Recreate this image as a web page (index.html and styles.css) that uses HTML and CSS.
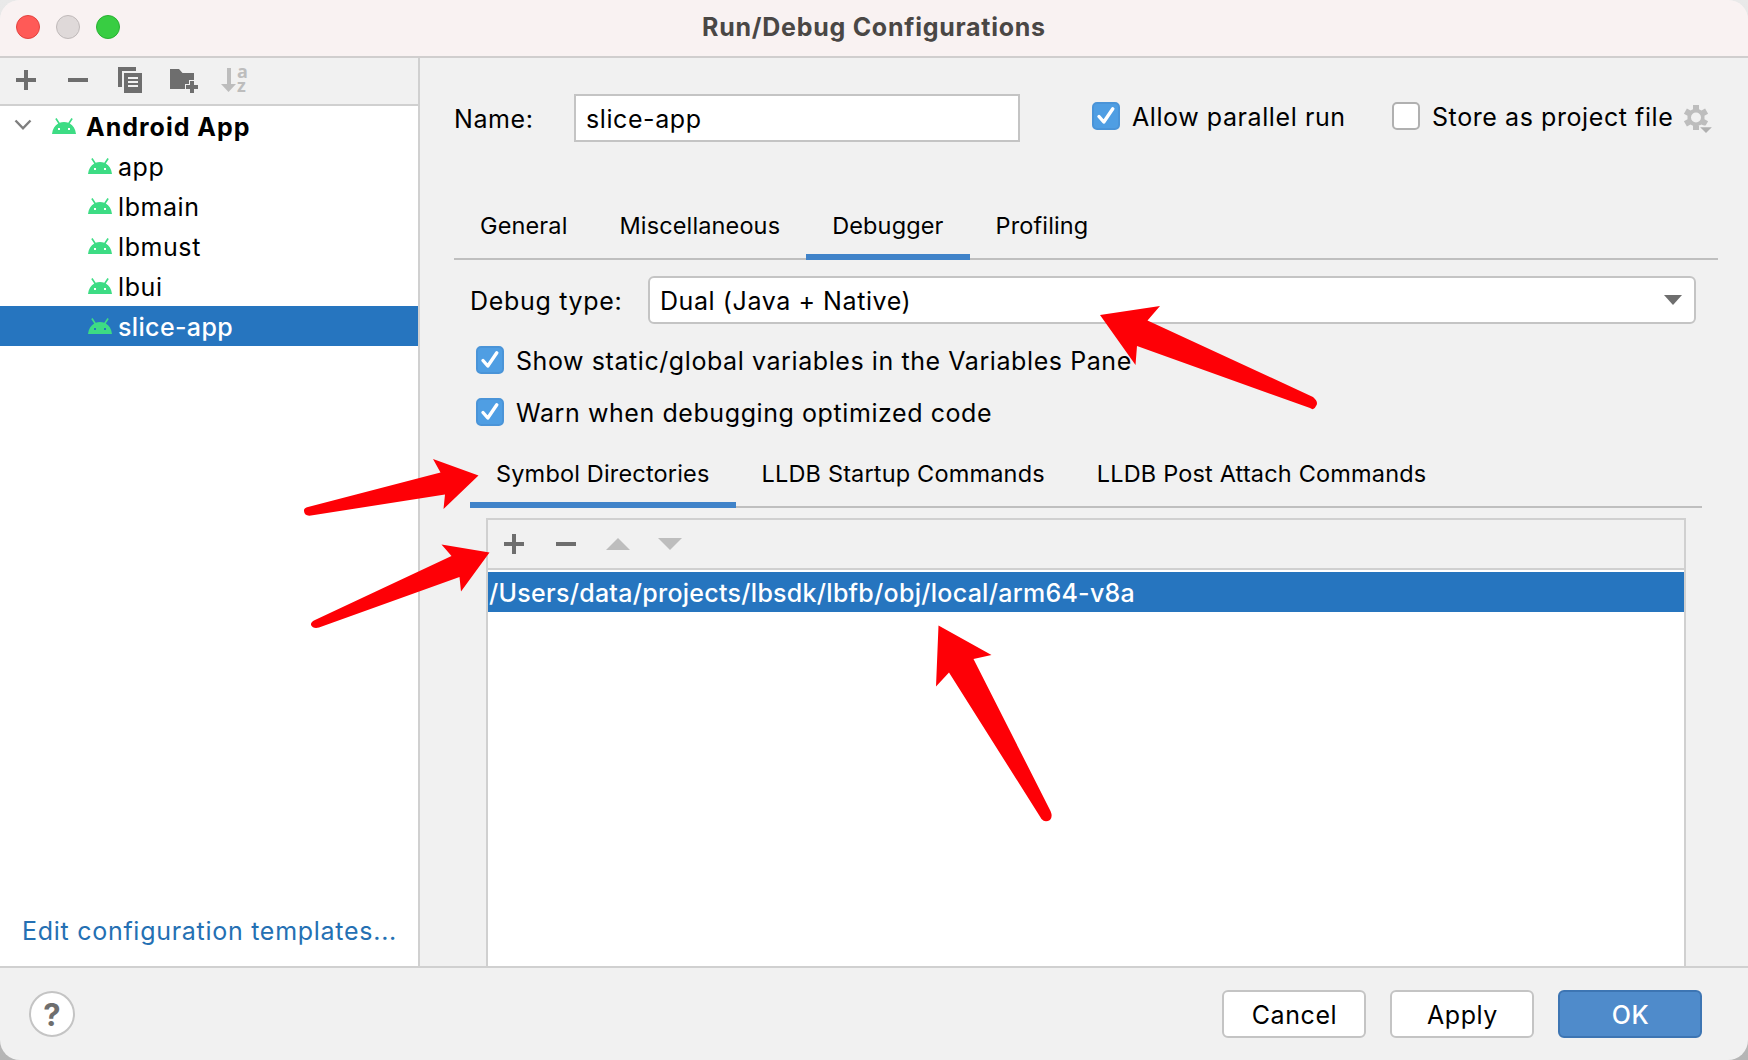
FILE: index.html
```html
<!DOCTYPE html>
<html lang="en">
<head>
<meta charset="utf-8">
<title>Run/Debug Configurations</title>
<link rel="stylesheet" href="styles.css">
</head>
<body>
<svg class="defs" width="0" height="0" aria-hidden="true">
  <symbol id="android" viewBox="0 0 24 16">
    <path d="M0 16C.5 10.800 3 7.200 6.200 5.500L3.200.900 4.600 0 7.700 4.700C10.300 3.700 13.700 3.700 16.300 4.700L19.400 0 20.800.900 17.800 5.500C21 7.200 23.500 10.800 24 16ZM6 10v2h2v-2ZM16 10v2h2v-2Z" fill="#3ddc84" fill-rule="evenodd"/>
  </symbol>
  <symbol id="plus" viewBox="0 0 20 20"><path d="M8 0h4v8h8v4h-8v8H8v-8H0V8h8Z" fill="#6e6e6e"/></symbol>
  <symbol id="minus" viewBox="0 0 20 20"><path d="M0 8h20v4H0Z" fill="#6e6e6e"/></symbol>
  <symbol id="tick" viewBox="0 0 28 28"><path d="M7 14.500 11.800 20 20.800 6.800" fill="none" stroke="#fff" stroke-width="3.400" stroke-linecap="round" stroke-linejoin="round"/></symbol>
</svg>
<div class="window">
  <header class="titlebar">
    <div class="lights"><i class="light red"></i><i class="light gray"></i><i class="light green"></i></div>
    <h1 class="title">Run/Debug Configurations</h1>
  </header>
  <div class="body">
    <aside class="sidebar">
      <div class="toolbar">
        <svg width="20" height="20"><use href="#plus"/></svg>
        <svg class="minus" width="20" height="20"><use href="#minus"/></svg>
        <svg class="copy" width="24" height="26" viewBox="0 0 24 26"><path d="M0 0h18v4H4v16H0ZM6 6h18v20H6ZM10 10v2h10v-2ZM10 14v2h10v-2ZM10 18v2h10v-2Z" fill="#6e6e6e" fill-rule="evenodd"/></svg>
        <svg class="folder" width="28" height="24" viewBox="0 0 28 24"><path d="M0 0h9l3.500 4H24v8h-4v4h-4v4H0Z" fill="#6e6e6e"/><path d="M19 11h6v4h4v6h-4v4h-6v-4h-4v-6h4Z" fill="#f1f1f1"/><path d="M20 12h4v4h4v4h-4v4h-4v-4h-4v-4h4Z" fill="#6e6e6e"/></svg>
        <svg class="sort" width="27" height="26" viewBox="0 0 27 26"><path d="M6 1h4v16h5L7.500 25 0 17h6Z" fill="#bdbdbd"/><text class="sort-text" x="16" y="10.500">a</text><text class="sort-text" x="16" y="24.500">z</text></svg>
      </div>
      <div class="tree">
        <div class="node root"><svg class="chevron" width="18" height="12" viewBox="0 0 18 12"><path d="M1.500 1.500 9 9.300l7.500-7.800" fill="none" stroke="#7f7f7f" stroke-width="2.400"/></svg><svg width="24" height="16"><use href="#android"/></svg><span>Android App</span></div>
        <div class="node"><svg width="24" height="16"><use href="#android"/></svg><span>app</span></div>
        <div class="node"><svg width="24" height="16"><use href="#android"/></svg><span>lbmain</span></div>
        <div class="node"><svg width="24" height="16"><use href="#android"/></svg><span>lbmust</span></div>
        <div class="node"><svg width="24" height="16"><use href="#android"/></svg><span>lbui</span></div>
        <div class="node selected"><svg width="24" height="16"><use href="#android"/></svg><span>slice-app</span></div>
      </div>
      <a class="link">Edit configuration templates...</a>
    </aside>
    <main class="main">
      <div class="name-row">
        <span class="name-label">Name:</span>
        <div class="field">slice-app</div>
        <span class="check on"><svg width="28" height="28"><use href="#tick"/></svg></span>
        <span class="check-label parallel">Allow parallel run</span>
        <span class="check"></span>
        <span class="check-label">Store as project file</span>
        <svg class="gear" width="28" height="30" viewBox="0 0 28 30">
          <path d="M9 1h6v4.200l2.500 1.400 3.600-2.100 3 5.200L20.500 11.800v3.400l3.600 2.100-3 5.200-3.600-2.100L15 21.800V26H9v-4.200L6.500 20.400 2.900 22.500-.1 17.300 3.500 15.200v-3.400L-.1 9.700l3-5.200L6.500 6.600 9 5.200ZM12 8.500a5 5 0 1 0 0 10 5 5 0 0 0 0-10Z" fill="#bdbdbd" fill-rule="evenodd"/>
          <path d="M14.500 21.500h14L21.500 29.500Z" fill="#f1f1f1"/>
          <path d="M16.200 23.200h11.600L22 29Z" fill="#b0b0b0"/>
        </svg>
      </div>
      <nav class="tabs outer">
        <span class="tab">General</span><span class="tab">Miscellaneous</span><span class="tab active">Debugger</span><span class="tab">Profiling</span>
      </nav>
      <section class="form">
        <div class="type-row">
          <span class="type-label">Debug type:</span>
          <div class="combo"><span>Dual (Java + Native)</span><svg width="18" height="10" viewBox="0 0 18 10"><path d="M0 0h18L9 10Z" fill="#6e6e6e"/></svg></div>
        </div>
        <div class="option"><span class="check on"><svg width="28" height="28"><use href="#tick"/></svg></span><span class="check-label">Show static/global variables in the Variables Pane</span></div>
        <div class="option"><span class="check on"><svg width="28" height="28"><use href="#tick"/></svg></span><span class="check-label">Warn when debugging optimized code</span></div>
        <nav class="tabs inner">
          <span class="tab active">Symbol Directories</span><span class="tab">LLDB Startup Commands</span><span class="tab">LLDB Post Attach Commands</span>
        </nav>
        <div class="panel">
          <div class="panel-tools">
            <svg width="20" height="20"><use href="#plus"/></svg>
            <svg width="20" height="20"><use href="#minus"/></svg>
            <svg class="up" width="24" height="12" viewBox="0 0 24 12"><path d="M0 12h24L12 0Z" fill="#bdbdbd"/></svg>
            <svg width="24" height="12" viewBox="0 0 24 12"><path d="M0 0h24L12 12Z" fill="#bdbdbd"/></svg>
          </div>
          <div class="path">/Users/data/projects/lbsdk/lbfb/obj/local/arm64-v8a</div>
        </div>
      </section>
    </main>
  </div>
  <footer class="footer">
    <span class="help">?</span>
    <div class="buttons"><span class="btn">Cancel</span><span class="btn">Apply</span><span class="btn primary">OK</span></div>
  </footer>
  <svg class="arrows" width="1748" height="1060" viewBox="0 0 1748 1060">
    <g fill="#fe0006">
      <path d="M1100 315 1160 306 1147.500 320.500 1313 397Q1319 402 1316 406 1314 411 1310 408L1137 346 1135.500 365Z"/>
      <path d="M478.500 475.500 433 459 440.500 472.500 308 507Q303.500 508 304 511 304.500 516.500 311 515.500L445 494.500 443.500 509Z"/>
      <path d="M489.500 552.500 441.500 544.500 451.500 556 315 620Q310.500 622 311 625 313 629 319 627.500L459.500 577 461 591.500Z"/>
      <path d="M938.500 625.500 991.500 655 973.500 659 1050.500 811Q1053 817 1050 820 1045 823 1041.500 819L949 672.500 936 686.500Z"/>
    </g>
  </svg>
</div>
</body>
</html>
```

FILE: styles.css
```css
* { box-sizing: border-box; }
body {
  margin: 0;
  background: linear-gradient(#e9e9e9, #b5b5b5);
  font: 25px Inter, "Liberation Sans", sans-serif;
  letter-spacing: 0.58px;
  color: #000;
  white-space: nowrap;
}
svg { display: block; flex: none; overflow: visible; }
.defs { position: absolute; }
.window {
  position: relative;
  display: flex;
  flex-direction: column;
  width: 1748px;
  height: 1060px;
  overflow: hidden;
  border-radius: 20px;
  background: #f1f1f1;
}
.titlebar {
  display: flex;
  align-items: center;
  flex: none;
  height: 58px;
  padding: 0 16px 2px;
  border-bottom: 2px solid #d0cece;
  background: #f9f2f2;
}
.lights { display: flex; gap: 16px; width: 686px; }
.light { width: 24px; height: 24px; border-radius: 50%; border: 1px solid; }
.red { background: #ff5a57; border-color: #e2433f; }
.gray { background: #dfd9d9; border-color: #bfb9b9; }
.green { background: #38cd42; border-color: #29b032; }
.title { margin: 0; font-size: 25px; font-weight: 700; letter-spacing: 0.74px; color: #4a4745; }
.body { display: flex; flex: none; height: 908px; }
.sidebar {
  display: flex;
  flex-direction: column;
  width: 420px;
  border-right: 2px solid #d0d0d0;
  background: #fff;
}
.toolbar {
  display: flex;
  align-items: center;
  height: 48px;
  padding: 0 16px 2px;
  border-bottom: 2px solid #d0d0d0;
  background: #f1f1f1;
}
.minus { margin-left: 32px; }
.copy { margin-left: 30px; }
.folder { margin: 2px 0 0 28px; }
.sort { margin-left: 23px; }
.sort-text { font: 700 18px "Open Sans", sans-serif; fill: #bdbdbd; letter-spacing: 0; }
.node { display: flex; align-items: center; gap: 6px; height: 40px; padding-left: 88px; }
.node span { padding-top: 2px; }
.root { gap: 0; padding-left: 14px; font-weight: 700; letter-spacing: 1px; }
.root .chevron { margin: -3px 20px 0 0; }
.root span { margin-left: 10px; }
.selected { background: #2675bf; color: #fff; font-weight: 500; letter-spacing: 0.35px; }
.link { margin: auto 0 20px 22px; line-height: 30px; color: #2470b3; letter-spacing: 0.72px; }
.main { flex: 1; padding: 36px 30px 0 34px; overflow: hidden; }
.name-row { display: flex; align-items: center; height: 48px; }
.name-label { width: 120px; padding-top: 2px; }
.field {
  width: 446px;
  height: 48px;
  margin-right: 72px;
  padding-left: 10px;
  border: 2px solid #c4c4c4;
  background: #fff;
  line-height: 47px;
}
.check {
  flex: none;
  width: 28px;
  height: 28px;
  border: 2px solid #b0b0b0;
  border-radius: 5px;
  background: #fff;
}
.check.on { border-color: #4a94d8; background: #4f9ee3; }
.check.on svg { margin: -2px; }
.check-label { margin-left: 12px; padding-top: 2px; }
.name-row .check, .name-row .check-label { position: relative; top: -2px; }
.parallel { width: 260px; }
.gear { margin: 2px 0 0 11px; }
.tabs {
  display: flex;
  box-shadow: inset 0 -2px #bfbfbf;
  font-size: 23.5px;
}
.outer { height: 70px; margin-top: 48px; line-height: 72px; letter-spacing: 0.13px; }
.tab { padding: 0 26px; }
.tab.active { box-shadow: inset 0 -6px #4083c9; }
.form { padding: 16px 16px 0; }
.type-row { display: flex; align-items: center; height: 48px; margin-right: 6px; }
.type-label { width: 178px; padding-top: 2px; letter-spacing: 0.68px; }
.combo {
  display: flex;
  align-items: center;
  justify-content: space-between;
  flex: 1;
  height: 48px;
  padding: 0 12px 0 10px;
  border: 2px solid #c4c4c4;
  border-radius: 6px;
  background: #fff;
}
.combo span { padding-top: 2px; }
.option { display: flex; align-items: center; height: 28px; margin: 22px 0 0 6px; }
.option + .option { margin-top: 24px; }
.inner { height: 68px; margin-top: 14px; line-height: 68px; letter-spacing: 0.17px; }
.panel {
  height: 500px;
  margin: 10px 16px 0;
  border: 2px solid #d0d0d0;
  background: #fff;
}
.panel-tools {
  display: flex;
  align-items: center;
  gap: 32px;
  height: 50px;
  padding: 0 16px;
  border-bottom: 2px solid #d0d0d0;
  background: #f1f1f1;
}
.panel-tools .up { margin: 0 -4px 0 -2px; }
.path {
  height: 40px;
  margin-top: 2px;
  padding-left: 1px;
  background: #2675bf;
  color: #fff;
  font-weight: 500;
  line-height: 43px;
  letter-spacing: 0.27px;
}
.footer {
  display: flex;
  align-items: center;
  justify-content: space-between;
  flex: 1;
  padding: 0 46px 0 29px;
  border-top: 2px solid #d0d0d0;
}
.help {
  width: 46px;
  height: 46px;
  border: 2px solid #c4c4c4;
  border-radius: 50%;
  background: #fff;
  color: #6e6e6e;
  font-size: 31px;
  font-weight: 700;
  letter-spacing: 0;
  line-height: 43px;
  text-align: center;
}
.buttons { display: flex; gap: 24px; }
.btn {
  width: 144px;
  height: 48px;
  padding-left: 1px;
  border: 2px solid #c4c4c4;
  border-radius: 6px;
  background: #fff;
  line-height: 47px;
  text-align: center;
}
.primary { border-color: #3d75b3; background: #4f8bcb; color: #fff; font-weight: 500; }
.arrows { position: absolute; left: 0; top: 0; }
```
